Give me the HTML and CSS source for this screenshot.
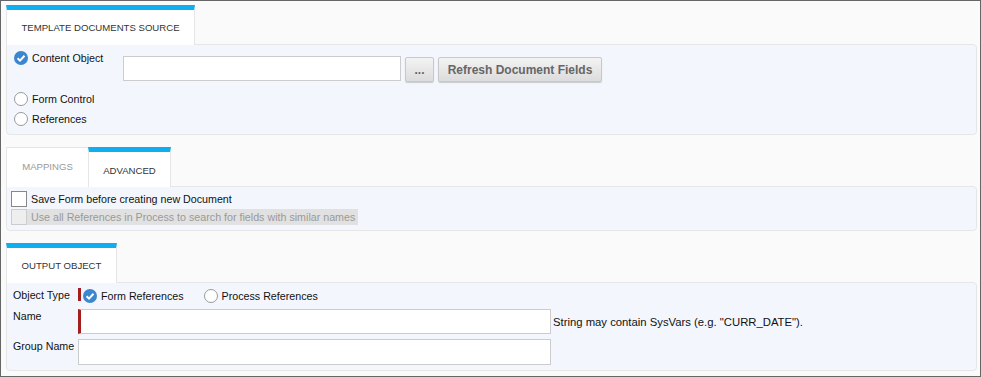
FILE: index.html
```html
<!DOCTYPE html>
<html lang="en">
<head>
    <meta charset="UTF-8">
    <meta name="viewport" content="width=device-width, initial-scale=1.0">
    <title>Create Document</title>
    <link rel="stylesheet" href="styles.css">
</head>
<body>
    <div class="frame">
        <div class="section">
            <div class="tabs">
                <div class="tab active tab-source">Template Documents Source</div>
            </div>
            <div class="panel panel-source">
                <div class="source-row">
                    <label class="choice">
                        <svg class="radio-on" viewBox="0 0 14 14"><circle cx="7" cy="7" r="7" fill="#3b86cf"/><path d="M3.6 7.3 L6 9.6 L10.5 4.7" stroke="#fff" stroke-width="2" fill="none"/></svg>
                        <span>Content Object</span>
                    </label>
                    <input class="text-input source-input" type="text">
                    <button class="btn btn-dots">...</button>
                    <button class="btn btn-refresh">Refresh Document Fields</button>
                </div>
                <div class="choice-row">
                    <label class="choice"><span class="radio"></span><span>Form Control</span></label>
                </div>
                <div class="choice-row">
                    <label class="choice"><span class="radio"></span><span>References</span></label>
                </div>
            </div>
        </div>

        <div class="section">
            <div class="tabs">
                <div class="tab tab-mappings">Mappings</div>
                <div class="tab active tab-advanced">Advanced</div>
            </div>
            <div class="panel panel-advanced">
                <div class="check-row">
                    <label class="check"><span class="checkbox"></span><span>Save Form before creating new Document</span></label>
                </div>
                <div class="check-row">
                    <label class="check disabled"><span class="checkbox"></span><span>Use all References in Process to search for fields with similar names</span></label>
                </div>
            </div>
        </div>

        <div class="section">
            <div class="tabs">
                <div class="tab active tab-output">Output Object</div>
            </div>
            <div class="panel panel-output">
                <div class="form-grid">
                    <div class="field-label">Object Type</div>
                    <div class="field type-field">
                        <span class="required-mark"></span>
                        <label class="choice">
                            <svg class="radio-on" viewBox="0 0 14 14"><circle cx="7" cy="7" r="7" fill="#3b86cf"/><path d="M3.6 7.3 L6 9.6 L10.5 4.7" stroke="#fff" stroke-width="2" fill="none"/></svg>
                            <span>Form References</span>
                        </label>
                        <label class="choice"><span class="radio"></span><span>Process References</span></label>
                    </div>

                    <div class="field-label">Name</div>
                    <div class="field">
                        <input class="text-input wide-input required" type="text">
                        <span class="hint">String may contain SysVars (e.g. "CURR_DATE").</span>
                    </div>

                    <div class="field-label">Group Name</div>
                    <div class="field">
                        <input class="text-input wide-input group-input" type="text">
                    </div>
                </div>
            </div>
        </div>
    </div>
</body>
</html>
```

FILE: styles.css
```css
body {
    margin: 0;
    font-family: "Liberation Sans", Arial, sans-serif;
    font-size: 10.7px;
    color: #111;
}
.frame {
    height: 377px;
    box-sizing: border-box;
    border: 1px solid #666;
    background-color: #fafafa;
    padding: 4px 3px 0 5px;
}
.section + .section {
    margin-top: 12px;
}
.tabs {
    display: flex;
    position: relative;
    z-index: 1;
    margin-bottom: -1px;
}
.tab {
    height: 40px;
    box-sizing: border-box;
    display: flex;
    align-items: center;
    justify-content: center;
    background-color: #fff;
    border: 1px solid #e6e6e6;
    border-bottom: none;
    font-size: 9.6px;
    text-transform: uppercase;
    color: #999;
    padding-bottom: 3px;
}
.tab.active {
    border-top: 5px solid #10aeef;
    color: #333;
    padding-bottom: 0;
}
.tab-source { width: 189px; }
.tab-mappings { width: 83px; }
.tab-advanced { width: 83px; margin-left: -1px; padding-top: 2px; }
.tab-output { width: 111px; }
.panel {
    background-color: #f3f7fd;
    border: 1px solid #e6e6e6;
    border-radius: 0 4px 4px 4px;
}
.panel-source {
    padding: 6px 7px 2px;
}
.source-row {
    display: flex;
    align-items: flex-start;
    height: 41px;
}
.source-row .choice {
    width: 109px;
}
.choice-row {
    height: 20px;
}
.choice {
    display: flex;
    align-items: center;
    gap: 4px;
    height: 14px;
    line-height: 14px;
}
.radio,
.radio-on {
    width: 14px;
    height: 14px;
    flex: none;
}
.radio {
    box-sizing: border-box;
    border: 1px solid #999;
    border-radius: 50%;
    background-color: #fff;
}
.text-input {
    box-sizing: border-box;
    height: 25px;
    margin: 0;
    border: 1px solid #ccc;
    background-color: #fff;
    padding: 2px 4px;
    font-family: inherit;
    font-size: 11px;
}
.source-input {
    width: 278px;
    margin-top: 5px;
}
.btn {
    box-sizing: border-box;
    height: 25px;
    margin-top: 6px;
    margin-left: 4px;
    border: 1px solid #c8c8c8;
    border-radius: 2px;
    background: linear-gradient(#f3f3f3, #dcdcdc);
    box-shadow: 0 1px 1px rgba(0, 0, 0, 0.18);
    color: #666;
    font-family: inherit;
    font-size: 12px;
    font-weight: bold;
    padding: 0;
}
.btn-dots { width: 29px; }
.btn-refresh { width: 164px; }
.panel-advanced {
    padding: 4px 4px 3px;
}
.check-row {
    height: 18px;
}
.check {
    display: inline-flex;
    align-items: center;
    gap: 4px;
    height: 16px;
}
.checkbox {
    box-sizing: border-box;
    width: 16px;
    height: 16px;
    border: 1px solid #888;
    background-color: #fff;
}
.check.disabled {
    background-color: #e1e1e1;
    color: #999;
    padding-right: 3px;
}
.check.disabled .checkbox {
    border-color: #ccc;
    background-color: #eee;
}
.panel-output {
    padding: 5px 6px;
}
.form-grid {
    display: grid;
    grid-template-columns: 65px auto;
    row-gap: 5px;
}
.field-label {
    line-height: 14px;
    color: #111;
}
.field {
    display: flex;
    align-items: center;
}
.type-field {
    height: 16px;
    align-items: flex-start;
}
.type-field .choice {
    margin-top: 1px;
}
.type-field .choice + .choice {
    margin-left: 20px;
}
.required-mark {
    width: 3px;
    height: 13px;
    background-color: #a51d1d;
    margin-right: 2px;
}
.wide-input {
    width: 473px;
}
.wide-input.required {
    border-left: 3px solid #a51d1d;
}
.group-input {
    height: 26px;
}
.hint {
    margin-left: 2px;
    font-size: 11.3px;
}
```
